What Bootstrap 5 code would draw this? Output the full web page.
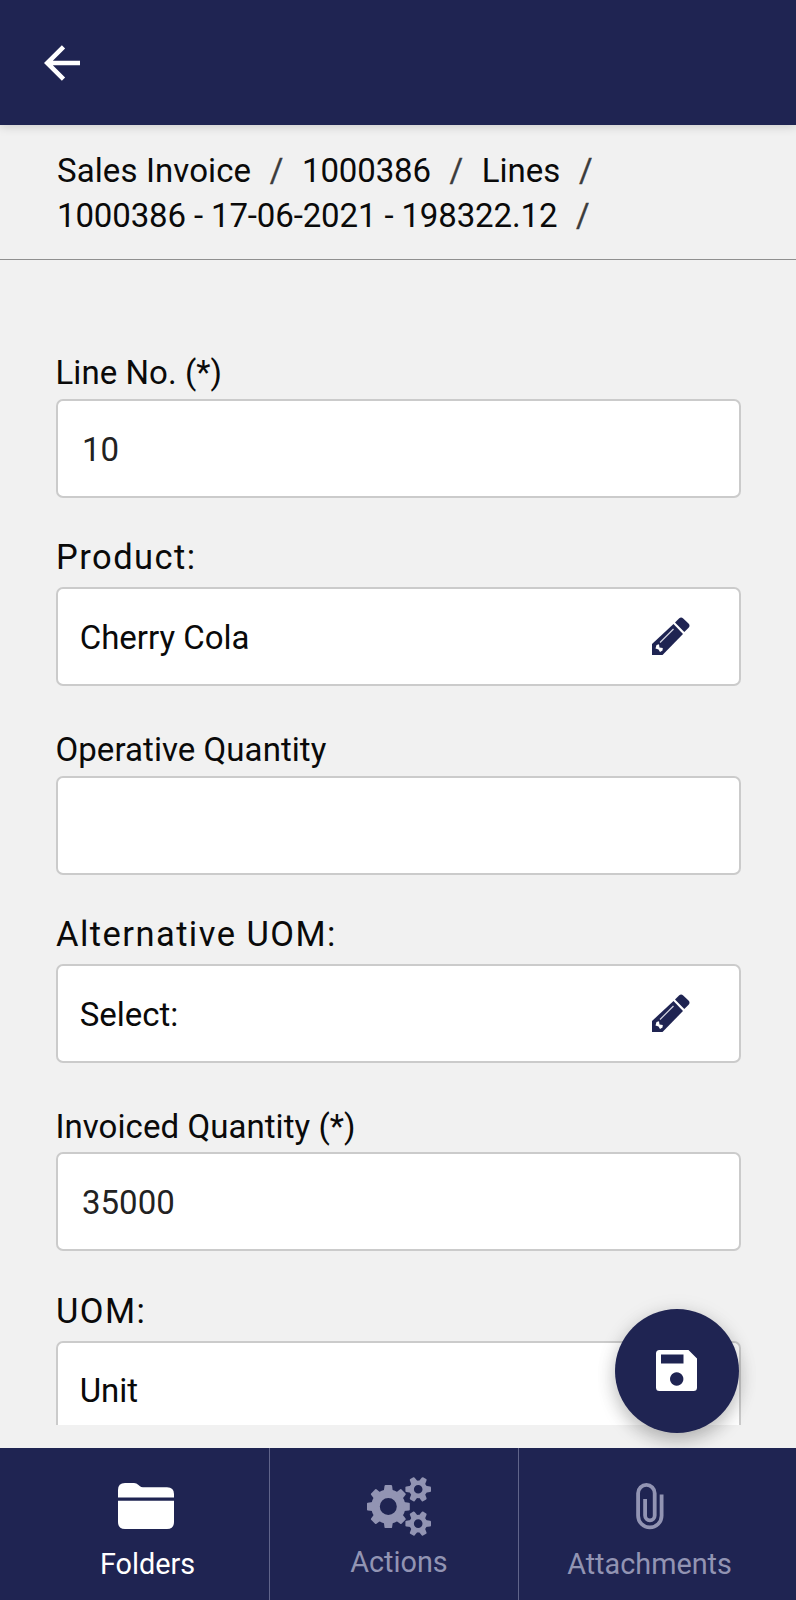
<!DOCTYPE html>
<html lang="en">
<head>
<meta charset="utf-8">
<meta name="viewport" content="width=device-width, initial-scale=1">
<title>Sales Invoice Line</title>
<link rel="stylesheet" href="https://cdn.jsdelivr.net/npm/bootstrap@5.3.0/dist/css/bootstrap.min.css">
<style>
  :root { --navy: #1f2452; --page: #f1f1f1; }
  body { font-family: Roboto, "Liberation Sans", sans-serif; font-size: 33px; line-height: 40px; color: #0a0a0a; background: var(--page); }
  .screen { height: 1600px; }
  .topbar { height: 125px; background: var(--navy); padding: 1px 0 0 44px; box-shadow: 0 1px 10px rgba(0,0,0,.18); z-index: 2; }
  .crumbs { height: 135px; padding: 23px 56px 0 57px; line-height: 45px; border-bottom: 1px solid #8f8f8f; }
  .crumbs .sep { color: #3c3c3c; margin: 0 18.5px 0 18.7px; -webkit-text-stroke: .3px #3c3c3c; }
  .crumbs .name { letter-spacing: .1px; }
  .crumbs .num { letter-spacing: -.13px; }
  .fields { height: 1165px; padding: 49.5px 55.5px 0 55.5px; }
  .field { height: 188.4px; flex: none; }
  .field-label { padding: 0 0 5.8px 0; letter-spacing: .06px; }
  .field-label.wide { font-size: 34.5px; letter-spacing: 1.45px; padding-bottom: 10px; padding-left: .5px; }
  .box { height: 99px; border: 2px solid #cbcbcb; border-radius: 7px; padding: 2px 47.5px 0 22.2px; font-size: 33px; line-height: 40px; color: #0a0a0a; background: #fff; }
  .box.typed { color: #222; padding-left: 24.5px; padding-top: 3px; }
  .box svg { margin-bottom: 3px; }
  .fab { position: absolute; left: 614.5px; top: 1308.5px; width: 124px; height: 124px; background: var(--navy); box-shadow: 0 8px 18px rgba(0,0,0,.22), 0 2px 22px rgba(0,0,0,.08); }
  .tabs { height: 152px; background: var(--navy); color: #fff; font-size: 28.8px; line-height: 36px; z-index: 3; }
  .tab { border-right: 1px solid #60648a; padding-top: 24px; }
  .tab:last-child { border: 0; }
  .tab.dim { color: #9294b3; }
  .t1 { width: 270px; padding-left: 23px; }
  .t2 { width: 249px; padding-left: 9px; }
  .t3 { width: 277px; padding-right: 16px; }
  .t1 span { padding-left: 3px; }
  .t2 span { padding-left: 1px; }
  .t1 svg, .t3 svg { margin-bottom: 8px; }
  .t2 svg { margin-bottom: 6px; }
</style>
</head>
<body>
<div class="screen position-relative d-flex flex-column overflow-hidden">
  <header class="topbar navbar flex-nowrap justify-content-start position-relative">
    <svg width="37" height="36" viewBox="0 0 37 36" fill="none" stroke="#fff" stroke-width="4.6"><path d="M36 18H4M19.500 1.800L3.200 18l16.300 16.200"/></svg>
  </header>

  <nav class="crumbs" aria-label="breadcrumb">
    <div class="d-flex"><span class="name">Sales Invoice</span><span class="sep">/</span><span class="num">1000386</span><span class="sep">/</span><span>Lines</span><span class="sep">/</span></div>
    <div class="d-flex"><span class="num">1000386 - 17-06-2021 - 198322.12</span><span class="sep">/</span></div>
  </nav>

  <main class="fields d-flex flex-column overflow-hidden">
    <div class="field d-flex flex-column justify-content-end"><div class="field-label">Line No. (*)</div><div class="box typed form-control d-flex align-items-center">10</div></div>
    <div class="field d-flex flex-column justify-content-end"><div class="field-label wide">Product:</div><div class="box form-control d-flex align-items-center justify-content-between">Cherry Cola
      <svg width="40" height="38" viewBox="0 0 40 38"><use href="#pencil"/></svg></div></div>
    <div class="field d-flex flex-column justify-content-end"><div class="field-label">Operative Quantity</div><div class="box typed form-control"></div></div>
    <div class="field d-flex flex-column justify-content-end"><div class="field-label wide">Alternative UOM:</div><div class="box form-control d-flex align-items-center justify-content-between">Select:
      <svg width="40" height="38" viewBox="0 0 40 38"><use href="#pencil"/></svg></div></div>
    <div class="field d-flex flex-column justify-content-end"><div class="field-label">Invoiced Quantity (*)</div><div class="box typed form-control d-flex align-items-center">35000</div></div>
    <div class="field d-flex flex-column justify-content-end"><div class="field-label wide">UOM:</div><div class="box form-control d-flex align-items-center">Unit</div></div>
  </main>

  <button class="fab btn rounded-circle border-0 p-0 d-flex align-items-center justify-content-center" aria-label="Save">
    <svg width="41" height="41" viewBox="0 0 41 41"><path fill="#fff" fill-rule="evenodd" d="M3.500 0H32.500L41 8.500V37.500Q41 41 37.500 41H3.500Q0 41 0 37.500V3.500Q0 0 3.500 0ZM5 4.500V13.500H27.500V4.500ZM20.700 22.300a6.700 6.700 0 1 0 .01 0Z"/></svg>
  </button>

  <footer class="tabs d-flex mt-auto position-relative">
    <div class="tab t1 d-flex flex-column align-items-center">
      <svg width="56" height="66" viewBox="0 0 56 66" fill="#fff"><path d="M0 25.500V18Q0 11 7 11H16Q18.500 11 20.500 13L22 14.300Q23 15.200 25 15.200H49Q56 15.200 56 22V25.500ZM0 28.700H56V50Q56 57 49 57H7Q0 57 0 50Z"/></svg>
      <span>Folders</span>
    </div>
    <div class="tab dim t2 d-flex flex-column align-items-center">
      <svg width="64" height="66" viewBox="0 0 64 66" fill="none" stroke="#9294b3">
        <circle cx="21.300" cy="34.600" r="12.800" stroke-width="8.600"/>
        <g fill="#9294b3" stroke="none">
          <path id="bt" d="M16.800 19L17.500 14Q17.700 13.100 18.500 13.100H24.100Q24.900 13.100 25.100 14L25.800 19Z"/>
          <use href="#bt" transform="rotate(45 21.300 34.600)"/><use href="#bt" transform="rotate(90 21.300 34.600)"/><use href="#bt" transform="rotate(135 21.300 34.600)"/><use href="#bt" transform="rotate(180 21.300 34.600)"/><use href="#bt" transform="rotate(225 21.300 34.600)"/><use href="#bt" transform="rotate(270 21.300 34.600)"/><use href="#bt" transform="rotate(315 21.300 34.600)"/>
        </g>
        <g id="cog">
          <circle cx="51.200" cy="17.300" r="6.600" stroke-width="4.600"/>
          <g fill="#9294b3" stroke="none">
            <path id="st" d="M58.500 13.800L63 14.500Q64 14.700 64 15.500V19.100Q64 19.900 63 20.100L58.500 20.800Z"/>
            <use href="#st" transform="rotate(60 51.200 17.300)"/><use href="#st" transform="rotate(120 51.200 17.300)"/><use href="#st" transform="rotate(180 51.200 17.300)"/><use href="#st" transform="rotate(240 51.200 17.300)"/><use href="#st" transform="rotate(300 51.200 17.300)"/>
          </g>
        </g>
        <use href="#cog" y="34.300"/>
      </svg>
      <span>Actions</span>
    </div>
    <div class="tab dim t3 d-flex flex-column align-items-center">
      <svg width="28" height="66" viewBox="0 0 28 66" fill="none" stroke="#9294b3" stroke-width="3.800"><path d="M25.600 22.500V43.700a11.750 11.750 0 0 1-23.500 0V21.200a8.300 8.300 0 0 1 16.600 0V43.500a4.800 4.800 0 0 1-9.600 0V27"/></svg>
      <span>Attachments</span>
    </div>
  </footer>
</div>

<svg width="0" height="0" class="position-absolute" aria-hidden="true">
  <defs>
    <g id="pencil">
      <path fill="#1f2452" d="M1 38V27L22.500 7L32 17L11.500 38Z"/>
      <path fill="#1f2452" d="M24 5.500L28 1.600Q30 -.6 32.200 1.400L37.500 6.600Q39.500 8.700 37.600 10.800L33.300 15Z"/>
      <path stroke="#d5d6e2" stroke-width="1.200" d="M9 25.500L22.500 12"/>
      <path fill="#fff" d="M5.500 28L8 27.300L8.500 30.500L11.800 31L11.500 33.500L9 35L7.500 32.500L4.500 31.500Z"/>
    </g>
  </defs>
</svg>
<script src="https://cdn.jsdelivr.net/npm/bootstrap@5.3.0/dist/js/bootstrap.bundle.min.js"></script>
</body>
</html>
